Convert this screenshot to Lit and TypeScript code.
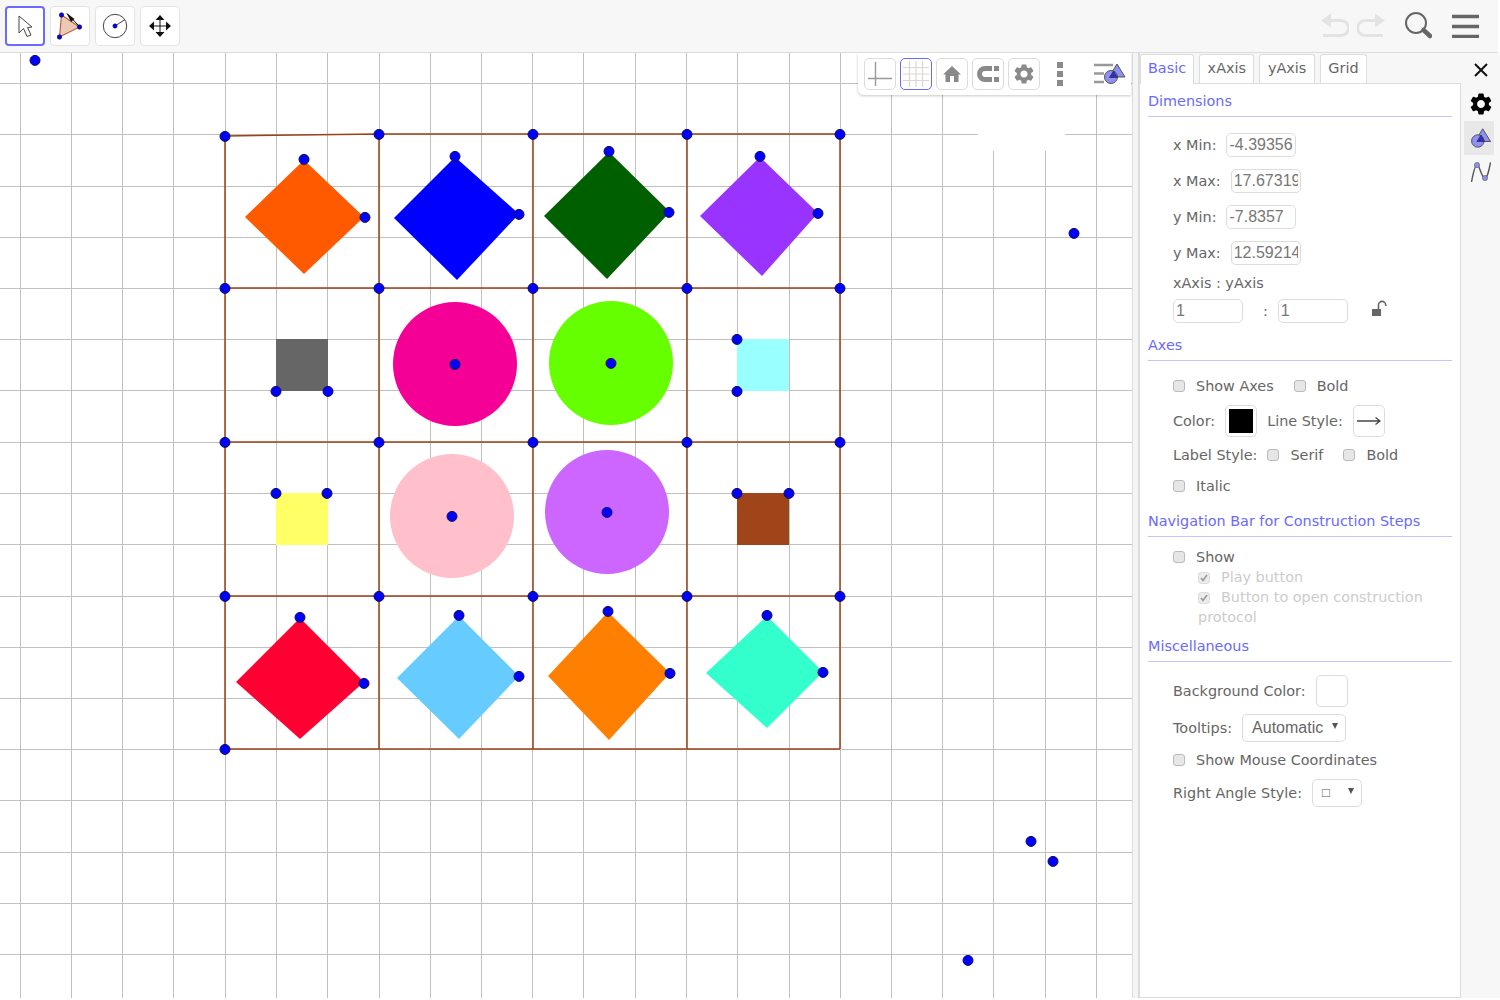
import { LitElement, html, css, svg } from "lit";
import { customElement } from "lit/decorators.js";

const xs = [20, 71, 122, 173, 225, 276, 327, 379, 430, 481, 532, 583, 635, 686, 737, 789, 840, 891, 942, 993, 1045, 1096];
const ys = [83, 134, 186, 237, 288, 339, 390, 442, 493, 544, 596, 647, 698, 749, 800, 852, 903, 954];
const diamonds: [string, string][] = [
  ["#ff5a00", "304,160 364,217 304,274 245,217"],
  ["#0000ff", "455,157 519,214 457,280 394,218"],
  ["#006000", "609,152 670,212 607,279 544,216"],
  ["#9933ff", "760,157 818,213 762,276 700,216"],
  ["#ff0033", "300,618 364,682 300,739 236,682"],
  ["#66ccff", "459,616 519,676 459,739 397,678"],
  ["#ff8000", "608,612 670,673 609,740 548,676"],
  ["#33ffcc", "767,616 823,672 767,728 706,673"],
];
const squares: [string, number, number][] = [
  ["#666666", 276, 339], ["#99ffff", 737, 339], ["#ffff66", 276, 493], ["#a0451a", 737, 493],
];
const circles: [string, number, number][] = [
  ["#f50096", 455, 364], ["#66ff00", 611, 363], ["#ffc0cb", 452, 516], ["#cc66ff", 607, 512],
];
const gx = [225, 379, 533, 687, 840];
const gy = [134, 288, 442, 596];
const points: [number, number][] = [
  [35, 60], [1074, 233], [1031, 841], [1053, 861], [968, 960], [225, 749],
  [304, 159], [365, 217], [455, 156], [519, 214], [609, 151], [669, 212], [760, 156], [818, 213],
  [276, 391], [328, 391], [737, 339], [737, 391], [276, 493], [327, 493], [737, 493], [789, 493],
  [300, 617], [364, 683], [459, 615], [519, 676], [608, 611], [670, 673], [767, 615], [823, 672],
  [455, 364], [611, 363], [452, 516], [607, 512],
];
for (const y of gy) for (const x of gx) points.push([x, x === 225 && y === 134 ? 136 : y]);

const GEAR = "M19.14 12.94c.04-.3.06-.61.06-.94 0-.32-.02-.64-.07-.94l2.03-1.58c.18-.14.23-.41.12-.61l-1.92-3.32c-.12-.22-.37-.29-.59-.22l-2.39.96c-.5-.38-1.03-.7-1.62-.94l-.36-2.54c-.04-.24-.24-.41-.48-.41h-3.84c-.24 0-.43.17-.47.41l-.36 2.54c-.59.24-1.13.57-1.62.94l-2.39-.96c-.22-.08-.47 0-.59.22L2.74 8.87c-.12.21-.08.47.12.61l2.03 1.58c-.05.3-.09.63-.09.94s.02.64.07.94l-2.03 1.58c-.18.14-.23.41-.12.61l1.92 3.32c.12.22.37.29.59.22l2.39-.96c.5.38 1.03.7 1.62.94l.36 2.54c.05.24.24.41.48.41h3.84c.24 0 .44-.17.47-.41l.36-2.54c.59-.24 1.13-.56 1.62-.94l2.39.96c.22.08.47 0 .59-.22l1.92-3.32c.12-.22.07-.47-.12-.61l-2.01-1.58zM12 15.6c-1.98 0-3.6-1.62-3.6-3.6s1.62-3.6 3.6-3.6 3.6 1.62 3.6 3.6-1.62 3.6-3.6 3.6z";

@customElement("app-root")
export class AppRoot extends LitElement {
  static styles = css`
    :host { display: block; width: 1500px; height: 1000px; overflow: hidden; background: #fff;
      font-family: "DejaVu Sans", sans-serif; font-size: 14.4px; color: #666; }
    .top { box-sizing: border-box; background: #f7f7f7; border-bottom: 1px solid #dcdcdc; height: 53px;
      display: flex; align-items: center; padding: 0 0 1px 5px; gap: 5px; width: 1498px; }
    .tool { width: 40px; height: 40px; box-sizing: border-box; background: #fff; border: 1px solid #e4e4e4; border-radius: 4px;
      display: flex; align-items: center; justify-content: center; }
    .tool.on { border: 2px solid #6a6aff; }
    .spacer { flex: 1; }
    .right-icons { display: flex; align-items: center; padding-right: 19px; height: 100%; }
    .ri1 { margin-right: 8px; }
    .ri2 { margin-right: 19px; }
    .ri3 { margin-right: 20px; }
    .main { display: flex; height: 945px; width: 1498px; }
    .canvas { position: relative; width: 1132px; flex: none; height: 945px; overflow: hidden; background: #fff; }
    .canvas > svg.plot { display: block; }
    .style { position: absolute; left: 858px; top: 0; width: 273px; height: 42px; box-sizing: border-box; background: #fff;
      border-radius: 0 0 0 6px; box-shadow: 0 1px 3px rgba(0,0,0,.22); display: flex; align-items: center; padding: 0 5px 0 6px; gap: 4px; }
    .sb { width: 32px; height: 32px; box-sizing: border-box; border: 1px solid #dcdcdc; border-radius: 5px; background: #fff;
      display: flex; align-items: center; justify-content: center; }
    .sb.on { border-color: #6a6aff; }
    .dots { width: 32px; display: flex; justify-content: center; }
    .menu-ic { margin-left: auto; display: flex; }
    .div { width: 6px; flex: none; background: #f5f5f5; border-left: 1px solid #dcdcdc; box-sizing: border-box; }
    .props { width: 323px; flex: none; display: flex; flex-direction: column; background: #f7f7f7; }
    .tabs { display: flex; height: 30px; flex: none; gap: 5px; padding-left: 0; box-sizing: border-box; align-items: flex-end; border-left: 2px solid #dcdcdc; }
    .tab { height: 29px; box-sizing: border-box; border: 1px solid #dcdcdc; border-bottom: none; border-radius: 3px 3px 0 0; background: #fff; padding: 0 7.5px;
      line-height: 27px; color: #666; }
    .tab.on { color: #6a6aff; height: 30px; margin-bottom: -1px; z-index: 1; padding: 0 7px; }
    .panel { flex: 1; background: #fff; border: 1px solid #dcdcdc; border-left-width: 2px; box-sizing: border-box; padding: 0 8px 0 8px; }
    .h { color: #6a6aff; line-height: 20px; border-bottom: 1px solid #c6c6ff; padding-bottom: 5px; }
    .row { display: flex; align-items: center; padding-left: 25px; white-space: nowrap; }
    input.t { box-sizing: border-box; height: 24px; border: 1px solid #dcdcdc; border-radius: 5px; padding: 0 2px; font-family: "Liberation Sans", sans-serif;
      font-size: 16px; color: #777; background: #fff; outline: none; }
    .w70 { width: 70px; }
    .ml10 { margin-left: 10px; }
    .cb { width: 12px; height: 12px; box-sizing: border-box; border: 1px solid #bbb; border-radius: 3px; background: #e6e6e6; flex: none; display: flex; align-items: center; justify-content: center; }
    .cb.off { background: #ececec; border-color: #dedede; }
    .ck { display: inline-flex; align-items: center; gap: 11px; }
    .ck.m { margin-left: 20px; }
    .swatch { width: 32px; height: 32px; box-sizing: border-box; border: 1px solid #dcdcdc; border-radius: 5px; display: flex; align-items: center; justify-content: center; background: #fff; }
    .swatch i { display: block; width: 24px; height: 24px; background: #000; }
    .sel { box-sizing: border-box; height: 28px; border: 1px solid #dcdcdc; border-radius: 5px; position: relative; font-family: "Liberation Sans", sans-serif; font-size: 16px; line-height: 26px; background: #fff; color: #666; }
    .sel::after { content: ""; position: absolute; right: 7px; top: 8px; border-left: 3px solid transparent; border-right: 3px solid transparent; border-top: 6px solid #555; }
    .sel.auto { width: 104px; padding-left: 9px; }
    .sel.angle { width: 50px; padding-left: 9px; font-size: 13px; color: #555; }
    .side { width: 39px; flex: none; background: #f7f7f7; display: flex; flex-direction: column; align-items: center; }
    .side .it { height: 34px; display: flex; align-items: center; justify-content: center; }
    .side .a { box-sizing: border-box; align-self: flex-start; margin-left: 3px; width: 30px; height: 34px; padding-left: 7px; background: #e8e8e8; display: flex; align-items: center; }
    .nav { margin-left: 50px; line-height: 20px; color: #ccc; width: 240px; white-space: normal; }
    .nav .cb { display: inline-flex; vertical-align: 0; margin-right: 11px; }
  `;

  render() {
    const ck = html`<svg width="8" height="8" viewBox="0 0 8 8"><path d="M1 4 L3 6.5 L7 1" fill="none" stroke="#999" stroke-width="1.6"/></svg>`;
    return html`
      <div class="top">
        <div class="tool on"><svg width="24" height="26" viewBox="0 0 24 26"><path d="M6 3 L6 20 L10.5 15.5 L14 23.5 L18 22 L14.5 14.5 L19 14 Z" fill="#fff" stroke="#444" stroke-width="1"/></svg></div>
        <div class="tool"><svg width="32" height="32" viewBox="0 0 32 32"><path d="M7.5 5 L25.5 17 L5.5 27 Z" fill="#ecc8b6" stroke="#b5683f" stroke-width="1.2"/><path d="M13 3.5 L25 16" stroke="#111" stroke-width="1"/><path d="M12.5 3 L20.5 9 L17 12 Z" fill="#111"/><circle cx="7.5" cy="5" r="2.2" fill="#00f" stroke="#113" stroke-width=".7"/><circle cx="25.5" cy="17" r="2.2" fill="#00f" stroke="#113" stroke-width=".7"/><circle cx="5.5" cy="27" r="2.2" fill="#00f" stroke="#113" stroke-width=".7"/></svg></div>
        <div class="tool"><svg width="28" height="28" viewBox="0 0 28 28"><circle cx="14" cy="14" r="11.7" fill="none" stroke="#444" stroke-width="1"/><path d="M14 14 L24 7.5" stroke="#444" stroke-width="1"/><circle cx="14" cy="14" r="2.2" fill="#00f" stroke="#113" stroke-width=".5"/></svg></div>
        <div class="tool"><svg width="24" height="24" viewBox="0 0 24 24"><path d="M12 2 L12 22 M2 12 L22 12" stroke="#111" stroke-width="1"/><path d="M12 1 L16.5 6 H7.5 Z M12 23 L16.5 18 H7.5 Z M1 12 L6 7.5 V16.5 Z M23 12 L18 7.5 V16.5 Z" fill="#111"/></svg></div>
        <div class="spacer"></div>
        <div class="right-icons">
          <svg class="ri1" width="28" height="26" viewBox="0 0 28 26"><path d="M8 7.5 H20 a7 7 0 0 1 0 15 H2" fill="none" stroke="#e3e3e3" stroke-width="3"/><path d="M0 7.5 L10 0.5 V14.5 Z" fill="#e3e3e3"/></svg>
          <svg class="ri2" width="28" height="26" viewBox="0 0 28 26"><path d="M20 7.5 H8 a7 7 0 0 0 0 15 H26" fill="none" stroke="#e3e3e3" stroke-width="3"/><path d="M28 7.5 L18 0.5 V14.5 Z" fill="#e3e3e3"/></svg>
          <svg class="ri3" width="28" height="28" viewBox="0 0 28 28"><circle cx="12" cy="11" r="10" fill="none" stroke="#666" stroke-width="2"/><path d="M19.5 18 L26 24" stroke="#666" stroke-width="4.5" stroke-linecap="round"/></svg>
          <svg width="27" height="24" viewBox="0 0 27 24"><path d="M0 2.5 H27 M0 12.5 H27 M0 22.5 H27" stroke="#666" stroke-width="3.3"/></svg>
        </div>
      </div>
      <div class="main">
        <div class="canvas">
          <svg class="plot" width="1132" height="945" viewBox="0 53 1132 945">
            ${xs.map((x) => svg`<line x1=${x + 0.5} x2=${x + 0.5} y1="53" y2="998" stroke="#c0c0c0"/>`)}
            ${ys.map((y) => svg`<line x1="0" x2="1132" y1=${y + 0.5} y2=${y + 0.5} stroke="#c0c0c0"/>`)}
            <rect x="978" y="84" width="87" height="67" fill="#fff"/>
            <path d="M225 136 L379 134 M225 288 H379 M379 134 H840 M225 442 H840 M225 596 H840 M225 749 H840 M225 288 H840 M225 136 V749 M379 134 V749 M533 134 V749 M687 134 V749 M840 134 V749" fill="none" stroke="#9a4218" stroke-width="1.5"/>
            ${diamonds.map(([c, p]) => svg`<polygon points=${p} fill=${c}/>`)}
            ${squares.map(([c, x, y]) => svg`<rect x=${x} y=${y} width="52" height="52" fill=${c}/>`)}
            ${circles.map(([c, x, y]) => svg`<circle cx=${x} cy=${y} r="62" fill=${c}/>`)}
            ${points.map(([x, y]) => svg`<circle cx=${x} cy=${y + 0.4} r="5" fill="#0000ff" stroke="#10104a" stroke-width="1"/>`)}
          </svg>
          <div class="style">
            <div class="sb"><svg width="26" height="26" viewBox="0 0 26 26"><path d="M1 17.5 H25 M8.5 1 V25" stroke="#999" stroke-width="1.4"/></svg></div>
            <div class="sb on"><svg width="26" height="26" viewBox="0 0 26 26"><path d="M0 6.5 H26 M0 13 H26 M0 19.5 H26 M6.5 0 V26 M13 0 V26 M19.5 0 V26" stroke="#dcd6d2" stroke-width="1.2"/></svg></div>
            <div class="sb"><svg width="20" height="18" viewBox="0 0 20 18"><path d="M10 1 L19 9.5 H16.5 V17 H12 V11 H8 V17 H3.5 V9.5 H1 Z" fill="#8a8a8a"/></svg></div>
            <div class="sb"><svg width="22" height="16" viewBox="0 0 22 16"><path d="M15 2.5 H8 A5.5 5.5 0 0 0 8 13.5 H15" fill="none" stroke="#8a8a8a" stroke-width="5"/><path d="M17 0 h5 v5 h-5 z M17 11 h5 v5 h-5 z" fill="#8a8a8a"/></svg></div>
            <div class="sb"><svg width="20" height="20" viewBox="2 2 20 20"><path fill="#8a8a8a" d=${GEAR}/></svg></div>
            <div class="dots"><svg width="6" height="24" viewBox="0 0 6 24"><path d="M0 0h6v6H0zM0 9h6v6H0zM0 18h6v6H0z" fill="#8a8a8a"/></svg></div>
            <div class="menu-ic"><svg width="34" height="26" viewBox="0 0 34 26"><path d="M2 4 H21 M2 12.5 H12 M2 21 H12" stroke="#999" stroke-width="2.4"/><path d="M25 3 L33 16 H17 Z" fill="#8f8ff5" stroke="#555"/><circle cx="19" cy="16" r="6.5" fill="#8f8ff5" stroke="#555"/><path d="M21.5 10 L25.5 16.5 H17.5 Z" fill="#2a2ae0" stroke="#333" stroke-width=".8"/></svg></div>
          </div>
        </div>
        <div class="div"></div>
        <div class="props">
          <div class="tabs">
            <div class="tab on">Basic</div><div class="tab">xAxis</div><div class="tab">yAxis</div><div class="tab">Grid</div>
          </div>
          <div class="panel">
            <div class="h" style="margin-top:7px">Dimensions</div>
            <div class="row" style="margin-top:16px;height:24px">x Min:<input class="t w70 ml10" .value=${"-4.39356"}></div>
            <div class="row" style="margin-top:12px;height:24px">x Max:<input class="t w70 ml10" .value=${"17.67319"}></div>
            <div class="row" style="margin-top:12px;height:24px">y Min:<input class="t w70 ml10" .value=${"-7.8357"}></div>
            <div class="row" style="margin-top:12px;height:24px">y Max:<input class="t w70 ml10" .value=${"12.59214"}></div>
            <div class="row" style="margin-top:8px;height:20px">xAxis : yAxis</div>
            <div class="row" style="margin-top:6px;height:24px"><input class="t w70" .value=${"1"}><span style="margin:0 10px 0 20px">:</span><input class="t w70" .value=${"1"}>
              <svg style="margin-left:22px;margin-top:-4px" width="18" height="18" viewBox="0 0 18 18"><path d="M2 9 H11 V16 H2 Z" fill="#666"/><path d="M8.5 9 V5 a3.6 3.6 0 0 1 7.2 0 V6" fill="none" stroke="#666" stroke-width="1.6"/></svg></div>
            <div class="h" style="margin-top:12px">Axes</div>
            <div class="row" style="margin-top:15px;height:20px"><span class="ck"><span class="cb"></span>Show Axes</span><span class="ck m"><span class="cb"></span>Bold</span></div>
            <div class="row" style="margin-top:9px;height:32px">Color:<span class="swatch ml10" style="margin-right:10px"><i></i></span>Line Style:<span class="swatch ml10"><svg width="24" height="10" viewBox="0 0 24 10"><path d="M0 5 H23 M18.5 1.5 L23 5 L18.5 8.5" fill="none" stroke="#444" stroke-width="1.3"/></svg></span></div>
            <div class="row" style="margin-top:8px;height:20px">Label Style:<span class="ck ml10"><span class="cb"></span>Serif</span><span class="ck m"><span class="cb"></span>Bold</span></div>
            <div class="row" style="margin-top:11px;height:20px"><span class="ck"><span class="cb"></span>Italic</span></div>
            <div class="h" style="margin-top:15px">Navigation Bar for Construction Steps</div>
            <div class="row" style="margin-top:10px;height:20px"><span class="ck"><span class="cb"></span>Show</span></div>
            <div class="nav"><span class="cb off">${ck}</span>Play button<br><span class="cb off">${ck}</span>Button to open construction protocol</div>
            <div class="h" style="margin-top:9px">Miscellaneous</div>
            <div class="row" style="margin-top:13px;height:32px">Background Color:<span class="swatch ml10"></span></div>
            <div class="row" style="margin-top:7px;height:28px">Tooltips:<span class="sel auto ml10">Automatic</span></div>
            <div class="row" style="margin-top:8px;height:20px"><span class="ck"><span class="cb"></span>Show Mouse Coordinates</span></div>
            <div class="row" style="margin-top:9px;height:28px">Right Angle Style:<span class="sel angle ml10">□</span></div>
          </div>
        </div>
        <div class="side">
          <div class="it"><svg width="16" height="16" viewBox="0 0 16 16"><path d="M2 2 L14 14 M14 2 L2 14" stroke="#111" stroke-width="2"/></svg></div>
          <div class="it"><svg width="22" height="22" viewBox="2 2 20 20"><path fill="#000" d=${GEAR}/></svg></div>
          <div class="a"><svg width="20" height="20" viewBox="0 0 20 20"><path d="M11.7 0.8 L19.6 13.5 H4 Z" fill="#8f8ff5" stroke="#555"/><circle cx="6.8" cy="13" r="6.2" fill="#8f8ff5" stroke="#555"/><path d="M10 7 L13.5 13.5 H6 Z" fill="#2a2ae0" stroke="#333" stroke-width=".8"/></svg></div>
          <div class="it"><svg width="20" height="20" viewBox="0 0 20 20"><path d="M0.5 20 C2 12 4 3 6 3 C9 3 10 16 14 16 C16.5 16 18 8 19.5 0.5" fill="none" stroke="#555" stroke-width="1.4"/><circle cx="6" cy="3" r="2.6" fill="#8f8ff5" stroke="#555" stroke-width=".6"/><circle cx="14" cy="16" r="2.6" fill="#8f8ff5" stroke="#555" stroke-width=".6"/></svg></div>
        </div>
      </div>
    `;
  }
}
